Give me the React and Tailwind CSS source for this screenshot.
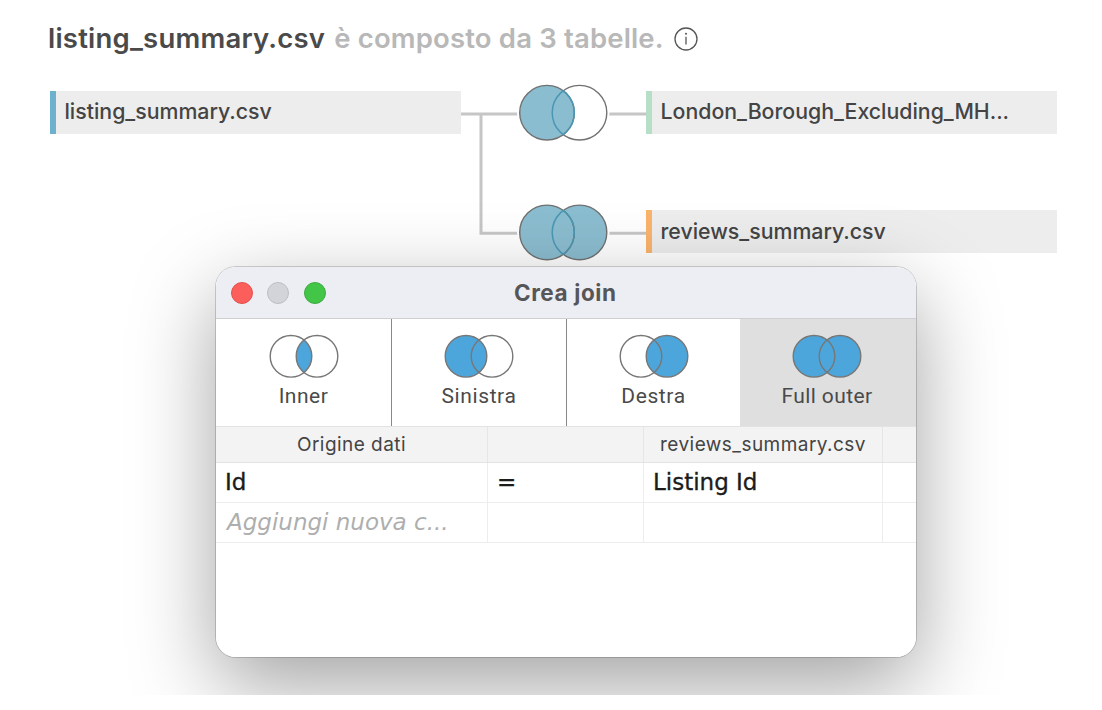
const BLUE = '#4da6db';
const TEAL = '#8bbdd0';

function JoinVenn({ id, left, right, inner }) {
  return (
    <svg width="70" height="46" viewBox="0 0 70 46" className="block">
      <clipPath id={id}>
        <circle cx="22" cy="23.3" r="20.8" />
      </clipPath>
      {left && <circle cx="22" cy="23.3" r="20.8" fill={BLUE} />}
      {right && <circle cx="48" cy="23.3" r="20.8" fill={BLUE} />}
      {inner && <circle cx="48" cy="23.3" r="20.8" fill={BLUE} clipPath={`url(#${id})`} />}
      <circle cx="22" cy="23.3" r="20.8" fill="none" stroke="#777" strokeWidth="1.4" />
      <circle cx="48" cy="23.3" r="20.8" fill="none" stroke="#777" strokeWidth="1.4" />
    </svg>
  );
}

function LinkVenn({ id, y, full }) {
  return (
    <g>
      <clipPath id={`${id}-l`}>
        <circle cx="86" cy={y} r="27.5" />
      </clipPath>
      <clipPath id={`${id}-r`}>
        <circle cx="118.5" cy={y} r="27.5" />
      </clipPath>
      <circle cx="86" cy={y} r="30" fill="#fff" />
      <circle cx="118.5" cy={y} r="30" fill="#fff" />
      <circle cx="118.5" cy={y} r="27.3" fill={full ? TEAL : '#fff'} stroke="#717171" strokeWidth="1.4" />
      <circle cx="86" cy={y} r="27.3" fill={TEAL} stroke="#717171" strokeWidth="1.4" />
      <circle cx="118.5" cy={y} r="27.3" fill="none" stroke="#4b97b3" strokeWidth="1.5" clipPath={`url(#${id}-l)`} />
      <circle cx="86" cy={y} r="27.3" fill="none" stroke="#4b97b3" strokeWidth="1.5" clipPath={`url(#${id}-r)`} />
    </g>
  );
}

function Connectors() {
  return (
    <svg width="185" height="185" viewBox="0 0 185 185" className="block">
      <path d="M0 34H57M148 34H185M20 34V153.3H57M148 153.3H185" fill="none" stroke="#c6c6c6" strokeWidth="3" />
      <LinkVenn id="borough" y={32.7} />
      <LinkVenn id="reviews" y={152.4} full />
    </svg>
  );
}

function TableBar({ accent, children }) {
  return (
    <div className="flex h-[43px] items-center bg-[#ededed]">
      <div className={`h-full w-[5.5px] ${accent}`} />
      <span className="ml-[9px] whitespace-nowrap text-[21.3px] font-medium leading-none text-[#444] [font-family:Inter,sans-serif]">{children}</span>
    </div>
  );
}

function Tab({ label, className, tracking, ...venn }) {
  return (
    <div className={`flex flex-col items-center pt-[14px] ${className}`}>
      <JoinVenn id={label.replace(' ', '-')} {...venn} />
      <span className={`mt-[5px] text-[21px] leading-[24px] text-[#4a4a4a] ${tracking}`}>{label}</span>
    </div>
  );
}

function JoinDialog() {
  return (
    <div className="absolute left-[216px] top-[267px] flex h-[390px] w-[700px] flex-col overflow-hidden rounded-[20px] bg-white">
      <div className="grid h-[52px] shrink-0 grid-cols-[1fr_auto_1fr] items-center border-b border-[#cfcfd2] bg-[#edeef4] pl-[14.5px]">
        <div className="flex gap-[14.5px]">
          <span className="size-[22px] rounded-full border border-[#e2504b] bg-[#fc5e5b]" />
          <span className="size-[22px] rounded-full border border-[#bebec2] bg-[#d3d4d9]" />
          <span className="size-[22px] rounded-full border border-[#3aab3d] bg-[#43c648]" />
        </div>
        <h2 className="-ml-[16px] pt-[2px] text-[22.5px] font-bold leading-none tracking-[0.6px] text-[#565658] [font-family:Inter,sans-serif]">Crea join</h2>
      </div>
      <div className="grid h-[107px] shrink-0 grid-cols-[176px_175px_173px_176px]">
        <Tab label="Inner" inner className="border-r border-[#888]" tracking="tracking-[0.5px]" />
        <Tab label="Sinistra" left className="border-r border-[#888]" tracking="tracking-[0.6px]" />
        <Tab label="Destra" right className="" tracking="tracking-[0.6px]" />
        <Tab label="Full outer" left right className="bg-[#dfdfdf] pr-[2px]" tracking="tracking-[0.4px]" />
      </div>
      <div className="grid h-[37px] shrink-0 grid-cols-[272px_156px_239px_33px] border-y border-[#e3e3e3] bg-[#f3f3f3] text-center text-[19px] leading-[35px] tracking-[0.45px] text-[#444] [font-family:Inter,sans-serif]">
        <div className="border-r border-[#e6e6e6]">Origine dati</div>
        <div className="border-r border-[#e6e6e6]" />
        <div className="border-r border-[#e6e6e6]">reviews_summary.csv</div>
        <div />
      </div>
      <div className="grid h-[40px] shrink-0 grid-cols-[272px_156px_239px_33px] border-b border-[#ededed] text-[23px] leading-[39px] text-[#1c1c1c] [-webkit-text-stroke:0.35px_#1c1c1c] [font-family:'DejaVu_Sans',sans-serif]">
        <div className="border-r border-[#ededed] pl-[9px]">Id</div>
        <div className="border-r border-[#ededed] pl-[9px]">=</div>
        <div className="border-r border-[#ededed] pl-[9px]">Listing Id</div>
        <div />
      </div>
      <div className="grid h-[40px] shrink-0 grid-cols-[272px_156px_239px_33px] border-b border-[#ededed] text-[23px] leading-[39px] text-[#aeaeae] [font-family:'DejaVu_Sans',sans-serif]">
        <div className="border-r border-[#ededed] pl-[11px] italic">Aggiungi nuova c...</div>
        <div className="border-r border-[#ededed]" />
        <div className="border-r border-[#ededed]" />
        <div />
      </div>
    </div>
  );
}

export default function App() {
  return (
    <div className="h-[710px] w-[1102px] bg-white [font-family:Roboto,sans-serif]">
      <main className="relative h-[695px] w-[1102px] overflow-hidden">
        <header className="flex h-[80px] items-center pb-[2px] pl-[48px] [font-family:Inter,sans-serif]">
          <h1 className="whitespace-nowrap text-[27.5px] font-semibold leading-none tracking-[0.22px] text-[#4a4a4a]">listing_summary.csv</h1>
          <p className="ml-[9px] whitespace-nowrap text-[27.5px] font-semibold leading-none tracking-[0.16px] text-[#b8b8b8]">è composto da 3 tabelle.</p>
          <svg width="24" height="24" viewBox="0 0 24 24" className="ml-[10px]">
            <circle cx="12" cy="12" r="11" fill="none" stroke="#555" strokeWidth="1.3" />
            <path d="M12 9.8V17.5" stroke="#555" strokeWidth="1.3" />
            <circle cx="12" cy="6.8" r="1" fill="#555" />
          </svg>
        </header>
        <section className="grid w-[1057px] grid-cols-[411px_185px_411px] pl-[50px]">
          <div className="pt-[10.5px]">
            <TableBar accent="bg-[#6db1cd]">listing_summary.csv</TableBar>
          </div>
          <Connectors />
          <div className="flex flex-col gap-[76.5px] pt-[10.5px]">
            <TableBar accent="bg-[#b7dec6]">London_Borough_Excluding_MH...</TableBar>
            <TableBar accent="bg-[#fab46c]">reviews_summary.csv</TableBar>
          </div>
        </section>
        <div className="absolute left-[216px] top-[267px] h-[390px] w-[700px] rounded-[20px] shadow-[0_0_0_1px_rgba(0,0,0,0.17),0_28px_84px_rgba(0,0,0,0.37)]" />
        <JoinDialog />
      </main>
    </div>
  );
}
